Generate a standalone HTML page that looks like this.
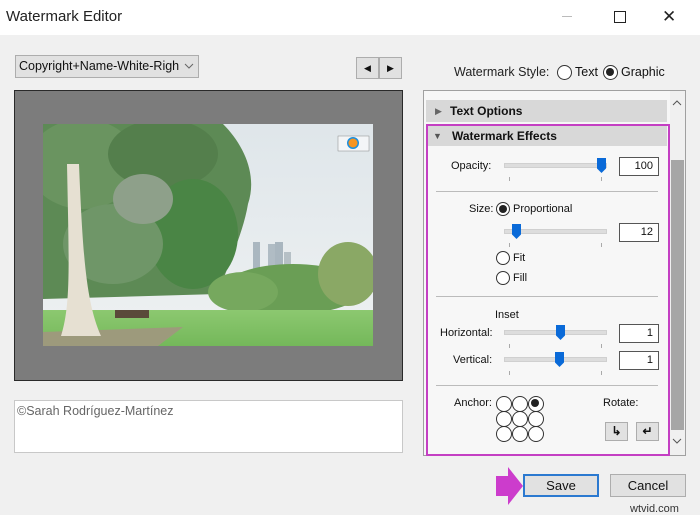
<!DOCTYPE html>
<html><head><meta charset="utf-8"><style>
*{margin:0;padding:0;box-sizing:border-box}
body{width:700px;height:513px;background:#f0f0f0;font-family:"Liberation Sans",sans-serif;font-size:12px;color:#111;position:relative;overflow:hidden}
.a{position:absolute;white-space:nowrap}
.title{left:0;top:0;width:700px;height:35px;background:#fff}
.btn{background:#e1e1e1;border:1px solid #adadad}
.hdr{background:#d8d8d8;font-weight:bold;font-size:12px;line-height:22px;padding-left:24px}
.r{border:1px solid #333;border-radius:50%;background:#fff;width:14px;height:14px}
.r.on::after{content:"";position:absolute;left:2px;top:2px;width:8px;height:8px;border-radius:50%;background:#222}
.tb{background:#fff;border:1px solid #555;text-align:right;padding-right:5px;line-height:17px;font-size:11px}
.track{height:5px;background:#ddd;border:1px solid #d0d0d0}
.th{width:9px;height:15px;background:#0a6ad8;clip-path:polygon(0 0,100% 0,100% 70%,50% 100%,0 70%)}
.tick{width:1px;height:4px;background:#aaa}
.hr{height:1px;background:#bbb}
.lb{font-size:11px}
</style></head><body>
<div class="a title"></div>
<div class="a" style="left:6px;top:8px;font-size:15px;color:#222">Watermark Editor</div>
<div class="a" style="left:562px;top:16px;width:10px;height:1px;background:#bbb"></div>
<div class="a" style="left:614px;top:11px;width:12px;height:12px;border:1px solid #222"></div>
<div class="a" style="left:662px;top:7px;font-size:17px;color:#222">✕</div>

<div class="a btn" style="left:15px;top:55px;width:184px;height:23px;line-height:21px;padding-left:3px;font-size:12.5px">Copyright+Name-White-Righ</div>
<svg class="a" style="left:184px;top:63px" width="10" height="7"><path d="M1 1 L5 5 L9 1" fill="none" stroke="#666"/></svg>
<div class="a btn" style="left:356px;top:57px;width:23px;height:22px;text-align:center;line-height:20px;font-size:9px">◀</div>
<div class="a btn" style="left:379px;top:57px;width:23px;height:22px;text-align:center;line-height:20px;font-size:9px">▶</div>

<div class="a" style="left:14px;top:90px;width:389px;height:291px;background:#7c7c7c;border:1px solid #2a2a2a"></div>
<svg class="a" style="left:43px;top:124px" width="330" height="222" viewBox="0 0 330 222">
<defs><linearGradient id="sky" x1="0" y1="0" x2="0" y2="1"><stop offset="0" stop-color="#dfe6ea"/><stop offset="1" stop-color="#eef1f2"/></linearGradient>
<linearGradient id="gr" x1="0" y1="0" x2="0" y2="1"><stop offset="0" stop-color="#8cc870"/><stop offset="1" stop-color="#74b85a"/></linearGradient></defs>
<rect width="330" height="222" fill="url(#sky)"/>
<rect x="210" y="118" width="7" height="28" fill="#aab7c0"/><rect x="225" y="120" width="7" height="26" fill="#b0bcc4"/><rect x="232" y="118" width="8" height="28" fill="#a9b6bf"/><rect x="241" y="128" width="7" height="18" fill="#b6c0c6"/>
<path d="M0 0 H180 C200 20 215 50 205 80 C200 110 185 140 175 170 L0 175Z" fill="#5d8a55"/>
<ellipse cx="40" cy="40" rx="55" ry="45" fill="#6a9460"/>
<ellipse cx="120" cy="30" rx="55" ry="35" fill="#547f4c"/>
<ellipse cx="150" cy="110" rx="45" ry="55" fill="#4a8545"/>
<ellipse cx="70" cy="120" rx="50" ry="40" fill="#6f9668"/>
<ellipse cx="100" cy="75" rx="30" ry="25" fill="#8ea08a"/>
<ellipse cx="250" cy="165" rx="70" ry="25" fill="#6a9e55"/>
<ellipse cx="305" cy="150" rx="30" ry="32" fill="#8aa865"/>
<ellipse cx="200" cy="168" rx="35" ry="20" fill="#76a85e"/>
<rect x="0" y="186" width="330" height="36" fill="url(#gr)"/>
<path d="M0 208 L140 203 L115 222 L0 222Z" fill="#9d9a7c"/>
<path d="M18 212 C28 180 26 140 24 40 L36 40 C40 140 44 180 58 212Z" fill="#e6e0d2"/>
<rect x="72" y="186" width="34" height="8" fill="#5a4a3a"/>
<rect x="295" y="12" width="31" height="15" fill="#fff" fill-opacity=".6" stroke="#888" stroke-width=".5"/>
<circle cx="310" cy="19" r="6" fill="#1a8fe0"/><circle cx="310" cy="19" r="4.5" fill="#f79420"/>
</svg>

<div class="a" style="left:14px;top:400px;width:389px;height:53px;background:#fff;border:1px solid #c8c8c8"></div>
<div class="a" style="left:17px;top:404px;font-size:12.5px;color:#666">©Sarah Rodríguez-Martínez</div>

<div class="a" style="left:454px;top:65px;font-size:12.5px;color:#222">Watermark Style:</div>
<div class="a r" style="left:557px;top:65px;width:15px;height:15px"></div>
<div class="a" style="left:575px;top:65px;font-size:12.5px">Text</div>
<div class="a r on" style="left:603px;top:65px;width:15px;height:15px"></div>
<div class="a" style="left:621px;top:65px;font-size:12.5px">Graphic</div>

<div class="a" style="left:423px;top:90px;width:263px;height:366px;background:#f7f7f7;border:1px solid #a0a0a0"></div>
<div class="a" style="left:670px;top:91px;width:15px;height:364px;background:#f0f0f0"></div>
<div class="a" style="left:671px;top:160px;width:13px;height:270px;background:#a6a6a6"></div>
<svg class="a" style="left:672px;top:100px" width="10" height="7"><path d="M1 5 L5 1 L9 5" fill="none" stroke="#555"/></svg>
<svg class="a" style="left:672px;top:438px" width="10" height="7"><path d="M1 1 L5 5 L9 1" fill="none" stroke="#555"/></svg>
<div class="a hdr" style="left:426px;top:100px;width:241px;height:22px">Text Options</div>
<div class="a" style="left:435px;top:106px;font-size:9px;color:#666">▶</div>

<div class="a" style="left:426px;top:124px;width:244px;height:332px;border:2px solid #c43fc3;background:#f7f7f7"></div>
<div class="a hdr" style="left:428px;top:126px;width:239px;height:20px;line-height:20px">Watermark Effects</div>
<div class="a" style="left:433px;top:131px;font-size:9px;color:#555">▼</div>

<div class="a lb" style="left:451px;top:160px">Opacity:</div>
<div class="a track" style="left:504px;top:163px;width:103px"></div>
<div class="a th" style="left:597px;top:158px"></div>
<div class="a tick" style="left:509px;top:177px"></div><div class="a tick" style="left:601px;top:177px"></div>
<div class="a tb" style="left:619px;top:157px;width:40px;height:19px">100</div>
<div class="a hr" style="left:436px;top:191px;width:222px"></div>

<div class="a lb" style="left:469px;top:203px">Size:</div>
<div class="a r on" style="left:496px;top:202px"></div>
<div class="a lb" style="left:513px;top:203px">Proportional</div>
<div class="a track" style="left:504px;top:229px;width:103px"></div>
<div class="a th" style="left:512px;top:224px"></div>
<div class="a tick" style="left:509px;top:243px"></div><div class="a tick" style="left:601px;top:243px"></div>
<div class="a tb" style="left:619px;top:223px;width:40px;height:19px">12</div>
<div class="a r" style="left:496px;top:251px"></div><div class="a lb" style="left:513px;top:252px">Fit</div>
<div class="a r" style="left:496px;top:271px"></div><div class="a lb" style="left:513px;top:272px">Fill</div>
<div class="a hr" style="left:436px;top:296px;width:222px"></div>

<div class="a lb" style="left:495px;top:309px">Inset</div>
<div class="a lb" style="left:440px;top:327px">Horizontal:</div>
<div class="a track" style="left:504px;top:330px;width:103px"></div>
<div class="a th" style="left:556px;top:325px"></div>
<div class="a tick" style="left:509px;top:344px"></div><div class="a tick" style="left:601px;top:344px"></div>
<div class="a tb" style="left:619px;top:324px;width:40px;height:19px">1</div>
<div class="a lb" style="left:453px;top:354px">Vertical:</div>
<div class="a track" style="left:504px;top:357px;width:103px"></div>
<div class="a th" style="left:555px;top:352px"></div>
<div class="a tick" style="left:509px;top:371px"></div><div class="a tick" style="left:601px;top:371px"></div>
<div class="a tb" style="left:619px;top:351px;width:40px;height:19px">1</div>
<div class="a hr" style="left:436px;top:385px;width:222px"></div>

<div class="a lb" style="left:454px;top:397px">Anchor:</div>
<div class="a r" style="left:496px;top:396px;width:16px;height:16px"></div><div class="a r" style="left:512px;top:396px;width:16px;height:16px"></div><div class="a r on" style="left:528px;top:396px;width:16px;height:16px"></div>
<div class="a r" style="left:496px;top:411px;width:16px;height:16px"></div><div class="a r" style="left:512px;top:411px;width:16px;height:16px"></div><div class="a r" style="left:528px;top:411px;width:16px;height:16px"></div>
<div class="a r" style="left:496px;top:426px;width:16px;height:16px"></div><div class="a r" style="left:512px;top:426px;width:16px;height:16px"></div><div class="a r" style="left:528px;top:426px;width:16px;height:16px"></div>
<div class="a lb" style="left:603px;top:397px">Rotate:</div>
<div class="a btn" style="left:605px;top:422px;width:23px;height:19px;text-align:center;line-height:17px;font-size:12px;font-weight:bold">↳</div>
<div class="a btn" style="left:636px;top:422px;width:23px;height:19px;text-align:center;line-height:17px;font-size:12px;font-weight:bold">↵</div>

<svg class="a" style="left:496px;top:467px" width="28" height="38"><path d="M0 9 H12 V0 L27 19 L12 38 V29 H0Z" fill="#cc3ccc"/></svg>
<div class="a btn" style="left:523px;top:474px;width:76px;height:23px;border:2px solid #2b79d0;text-align:center;line-height:19px;font-size:13px">Save</div>
<div class="a btn" style="left:610px;top:474px;width:76px;height:23px;text-align:center;line-height:21px;font-size:13px">Cancel</div>
<div class="a" style="left:630px;top:503px;font-size:11px;color:#333">wtvid.com</div>
</body></html>
